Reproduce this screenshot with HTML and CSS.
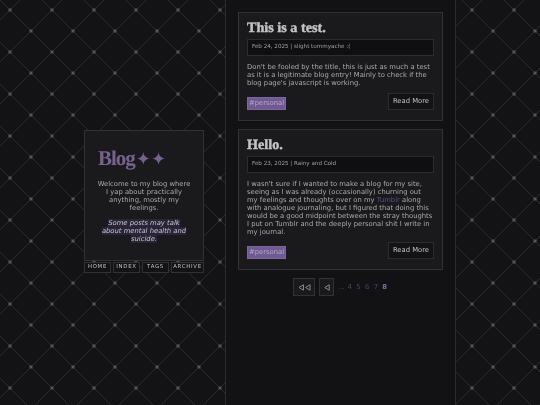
FILE: index.html
```html
<!DOCTYPE html>
<html lang="en">
<head>
<meta charset="utf-8">
<title>Blog</title>
<link rel="stylesheet" href="styles.css">
</head>
<body>
<div class="page">
  <aside class="side">
    <div class="intro">
      <h1 class="logo">Blog<span class="stars">✦✦</span></h1>
      <p class="welcome">Welcome to my blog where I yap about practically anything, mostly my feelings.</p>
      <p class="warn"><em>Some posts may talk about mental health and suicide.</em></p>
    </div>
    <nav class="nav">
      <a>HOME</a><a>INDEX</a><a>TAGS</a><a class="last">ARCHIVE</a>
    </nav>
  </aside>
  <main class="col">
    <article class="post">
      <h2 class="title">This is a test.</h2>
      <div class="meta">Feb 24, 2025 | slight tummyache :(</div>
      <p class="body">Don't be fooled by the title, this is just as much a test as it is a legitimate blog entry! Mainly to check if the blog page's javascript is working.</p>
      <div class="foot"><span class="tag">#personal</span><a class="more">Read More</a></div>
    </article>
    <article class="post">
      <h2 class="title">Hello.</h2>
      <div class="meta">Feb 23, 2025 | Rainy and Cold</div>
      <p class="body">I wasn't sure if I wanted to make a blog for my site, seeing as I was already (occasionally) churning out my feelings and thoughts over on my <a class="link">Tumblr</a> along with analogue journaling, but I figured that doing this would be a good midpoint between the stray thoughts I put on Tumblr and the deeply personal shit I write in my journal.</p>
      <div class="foot"><span class="tag">#personal</span><a class="more">Read More</a></div>
    </article>
    <div class="pager">
      <a class="pbtn wide"><svg width="13" height="7" viewBox="0 0 13 7"><path d="M5.5.8v5.4L1 3.5zM12 .8v5.4L7.5 3.5z" fill="none" stroke="#8a8a8a"/></svg></a>
      <a class="pbtn"><svg width="6" height="7" viewBox="0 0 6 7"><path d="M5.2.8v5.4L.8 3.5z" fill="none" stroke="#8a8a8a"/></svg></a>
      <span class="dots">...</span>
      <a class="num">4</a><a class="num">5</a><a class="num">6</a><a class="num">7</a><a class="num cur">8</a>
    </div>
  </main>
</div>
</body>
</html>
```

FILE: styles.css
```css
* { box-sizing: border-box; }
html, body { margin: 0; height: 100%; }
body {
  overflow: hidden;
  background-color: #131315;
  background-image: url("data:image/svg+xml,%3Csvg xmlns='http://www.w3.org/2000/svg' width='42' height='42'%3E%3Cpath d='M0 0L42 42M42 0L0 42' stroke='%232a2a2d' stroke-width='1'/%3E%3Cpath d='M-1.5-1.5h3v3h-3zM40.5-1.5h3v3h-3zM-1.5 40.5h3v3h-3zM40.5 40.5h3v3h-3zM19.5 19.5h3v3h-3z' fill='%23555557'/%3E%3C/svg%3E");
  background-size: 42px 42px;
  background-position: 10px 10px;
  font-family: "DejaVu Sans", sans-serif;
  font-size: 6.8px;
  line-height: 8px;
  color: #aaaaaa;
  text-rendering: geometricPrecision;
}
.page {
  height: 405px;
  display: grid;
  grid-template-columns: 225px 231px;
  will-change: transform;
}
.side {
  align-self: center;
  margin-left: 84px;
  margin-bottom: 2px;
  width: 120px;
}
.intro {
  height: 131px;
  padding: 15px 12px 0;
  background: #1a1a1c;
  border: 1px solid #323234;
  text-align: center;
}
.logo {
  margin: 0 0 8px 1px;
  text-align: left;
  font: bold 21px/24px "Liberation Serif", serif;
  letter-spacing: -1px;
  color: #77628f;
}
.stars { margin-left: 1px; font: 18px/24px "DejaVu Sans", sans-serif; letter-spacing: 0; }
.welcome, .warn { margin: 0; }
.warn { margin: 7px 2px 0; }
.warn em { background: #2b2438; color: #c4c4cc; }
.nav {
  display: flex;
  gap: 2px;
  margin-top: 1px;
}
.nav a {
  width: 27px;
  height: 11px;
  background: #131315;
  border: 1px solid #323234;
  font-size: 5.4px;
  line-height: 9px;
  letter-spacing: .7px;
  text-align: center;
  color: #c0c0c0;
}
.nav .last { width: 33px; }
.col {
  min-height: 405px;
  padding: 12px 12px 0;
  background: #121214;
  border-left: 1px solid #2c2c2e;
  border-right: 1px solid #2c2c2e;
}
.post {
  padding: 6px 8px 10px;
  margin-bottom: 8px;
  background: #1a1a1c;
  border: 1px solid #323234;
}
.title {
  margin: 0 0 2px;
  font: bold 14.2px/18px "Liberation Serif", serif;
  -webkit-text-stroke: .4px #c4c4c4;
  color: #c4c4c4;
}
.meta {
  height: 17px;
  padding-left: 4px;
  background: #0f0f11;
  border: 1px solid #2c2c2e;
  font-size: 5.6px;
  line-height: 15px;
  color: #a0a0a0;
}
.body { margin: 7px 1px 0 0; }
.link { color: #5f4f7d; }
.foot {
  display: flex;
  justify-content: space-between;
  align-items: flex-end;
  margin-top: 6px;
}
.tag {
  height: 13px;
  padding: 0 1px;
  background: #6f5a92;
  border: 1px solid #7b66a0;
  line-height: 11px;
  color: #b5a8c8;
}
.more {
  height: 17px;
  padding: 0 4px;
  background: #131315;
  border: 1px solid #2c2c2e;
  line-height: 15px;
  color: #c0c0c0;
}
.pager {
  display: flex;
  align-items: center;
  margin-left: 55px;
  color: #5f5480;
}
.pbtn {
  display: flex;
  align-items: center;
  justify-content: center;
  width: 15px;
  height: 18px;
  margin-right: 4px;
  background: #1a1a1c;
  border: 1px solid #323234;
}
.wide { width: 22px; }
.dots { margin-right: 3px; color: #555; }
.num { margin-right: 4.4px; color: #4e4568; }
.num.cur { font-weight: bold; color: #7b6f9e; }
```
